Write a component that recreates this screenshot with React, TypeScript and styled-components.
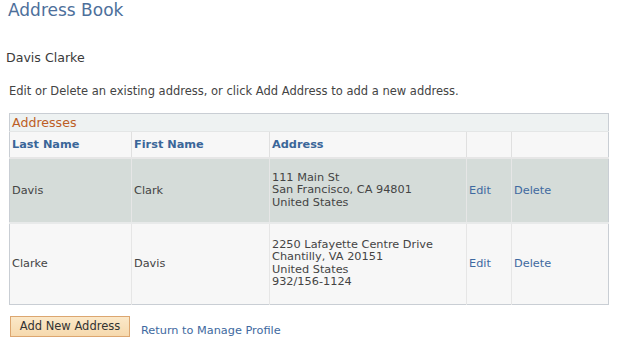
import { createGlobalStyle } from 'styled-components';
import styled from 'styled-components';

type Address = {
	last: string;
	first: string;
	lines: string[];
	height: number;
};

const addresses: Address[] = [
	{ last: 'Davis', first: 'Clark', lines: ['111 Main St', 'San Francisco, CA 94801', 'United States'], height: 65 },
	{
		last: 'Clarke',
		first: 'Davis',
		lines: ['2250 Lafayette Centre Drive', 'Chantilly, VA 20151', 'United States', '932/156-1124'],
		height: 81,
	},
];

const App = () => (
	<Page>
		<GlobalStyle />
		<Title>Address Book</Title>
		<UserName>Davis Clarke</UserName>
		<Instructions>Edit or Delete an existing address, or click Add Address to add a new address.</Instructions>
		<Grid>
			<colgroup>
				<col style={{ width: 122 }} />
				<col style={{ width: 138 }} />
				<col style={{ width: 197 }} />
				<col style={{ width: 45 }} />
				<col />
			</colgroup>
			<thead>
				<tr>
					<Caption colSpan={5}>Addresses</Caption>
				</tr>
				<tr>
					<HeadCell>Last Name</HeadCell>
					<HeadCell>First Name</HeadCell>
					<HeadCell>Address</HeadCell>
					<HeadCell />
					<HeadCell />
				</tr>
			</thead>
			<tbody>
				{addresses.map((a, i) => (
					<Row key={a.last} $shaded={i === 0} style={{ height: a.height }}>
						<Cell>{a.last}</Cell>
						<Cell>{a.first}</Cell>
						<Cell>
							{a.lines.map((l) => (
								<Line key={l}>{l}</Line>
							))}
						</Cell>
						<Cell>
							<Link href="#">Edit</Link>
						</Cell>
						<Cell>
							<Link href="#">Delete</Link>
						</Cell>
					</Row>
				))}
			</tbody>
		</Grid>
		<Actions>
			<Button>Add New Address</Button>
			<Link href="#">Return to Manage Profile</Link>
		</Actions>
	</Page>
);

const GlobalStyle = createGlobalStyle`
	body {
		margin: 0;
		background: #ffffff;
		font-family: "DejaVu Sans", Verdana, sans-serif;
		color: #444444;
	}
`;

const Page = styled.div`
	width: 622px;
	height: 346px;
	overflow: hidden;
`;

const Title = styled.h1`
	margin: 0 0 0 8px;
	padding-top: 1px;
	font-size: 17px;
	font-weight: normal;
	line-height: 19px;
	color: #4d6f9b;
`;

const UserName = styled.div`
	margin: 31px 0 0 6px;
	font-size: 12.6px;
	line-height: 14px;
	color: #3a3a3a;
`;

const Instructions = styled.p`
	margin: 20px 0 0 9px;
	font-size: 11.5px;
	line-height: 13px;
`;

const Grid = styled.table`
	margin: 15px 0 0 9px;
	width: 600px;
	border-collapse: collapse;
	table-layout: fixed;
	border: 1px solid #c9ced4;
	font-size: 11.3px;
	color: #444444;
`;

const Caption = styled.th`
	height: 17px;
	padding: 0 0 0 2px;
	text-align: left;
	font-size: 12.6px;
	font-weight: normal;
	color: #bd5e26;
	background: #eef2f2;
	border-bottom: 1px solid #e4e6e6;
`;

const HeadCell = styled.th`
	height: 25px;
	padding: 0 2px;
	text-align: left;
	font-weight: bold;
	color: #3a6699;
	background: #f7f7f7;
	border-left: 1px solid #e0e0e0;
	border-bottom: 2px solid #e6e6e6;
	&:first-child {
		border-left: none;
	}
`;

const Row = styled.tr<{ $shaded: boolean }>`
	background: ${(p) => (p.$shaded ? '#d5dcd9' : '#f7f7f7')};
	border-bottom: 2px solid #e8eaea;
	&:last-child {
		border-bottom: none;
	}
`;

const Cell = styled.td`
	padding: 0 2px;
	vertical-align: middle;
	border-left: 1px solid #e6e6e6;
	&:first-child {
		border-left: none;
	}
`;

const Line = styled.div`
	line-height: 12.5px;
`;

const Link = styled.a`
	color: #3e69a0;
	text-decoration: none;
	font-size: 11.3px;
`;

const Actions = styled.div`
	display: flex;
	align-items: flex-end;
	gap: 11px;
	margin: 11px 0 0 10px;
`;

const Button = styled.button`
	height: 21px;
	width: 120px;
	padding: 0;
	font-family: "DejaVu Sans", Verdana, sans-serif;
	font-size: 11.5px;
	color: #333333;
	background: linear-gradient(#fbe8c9, #f6d9ad);
	border: 1px solid #dca670;
	border-radius: 0;
`;

export default App;
